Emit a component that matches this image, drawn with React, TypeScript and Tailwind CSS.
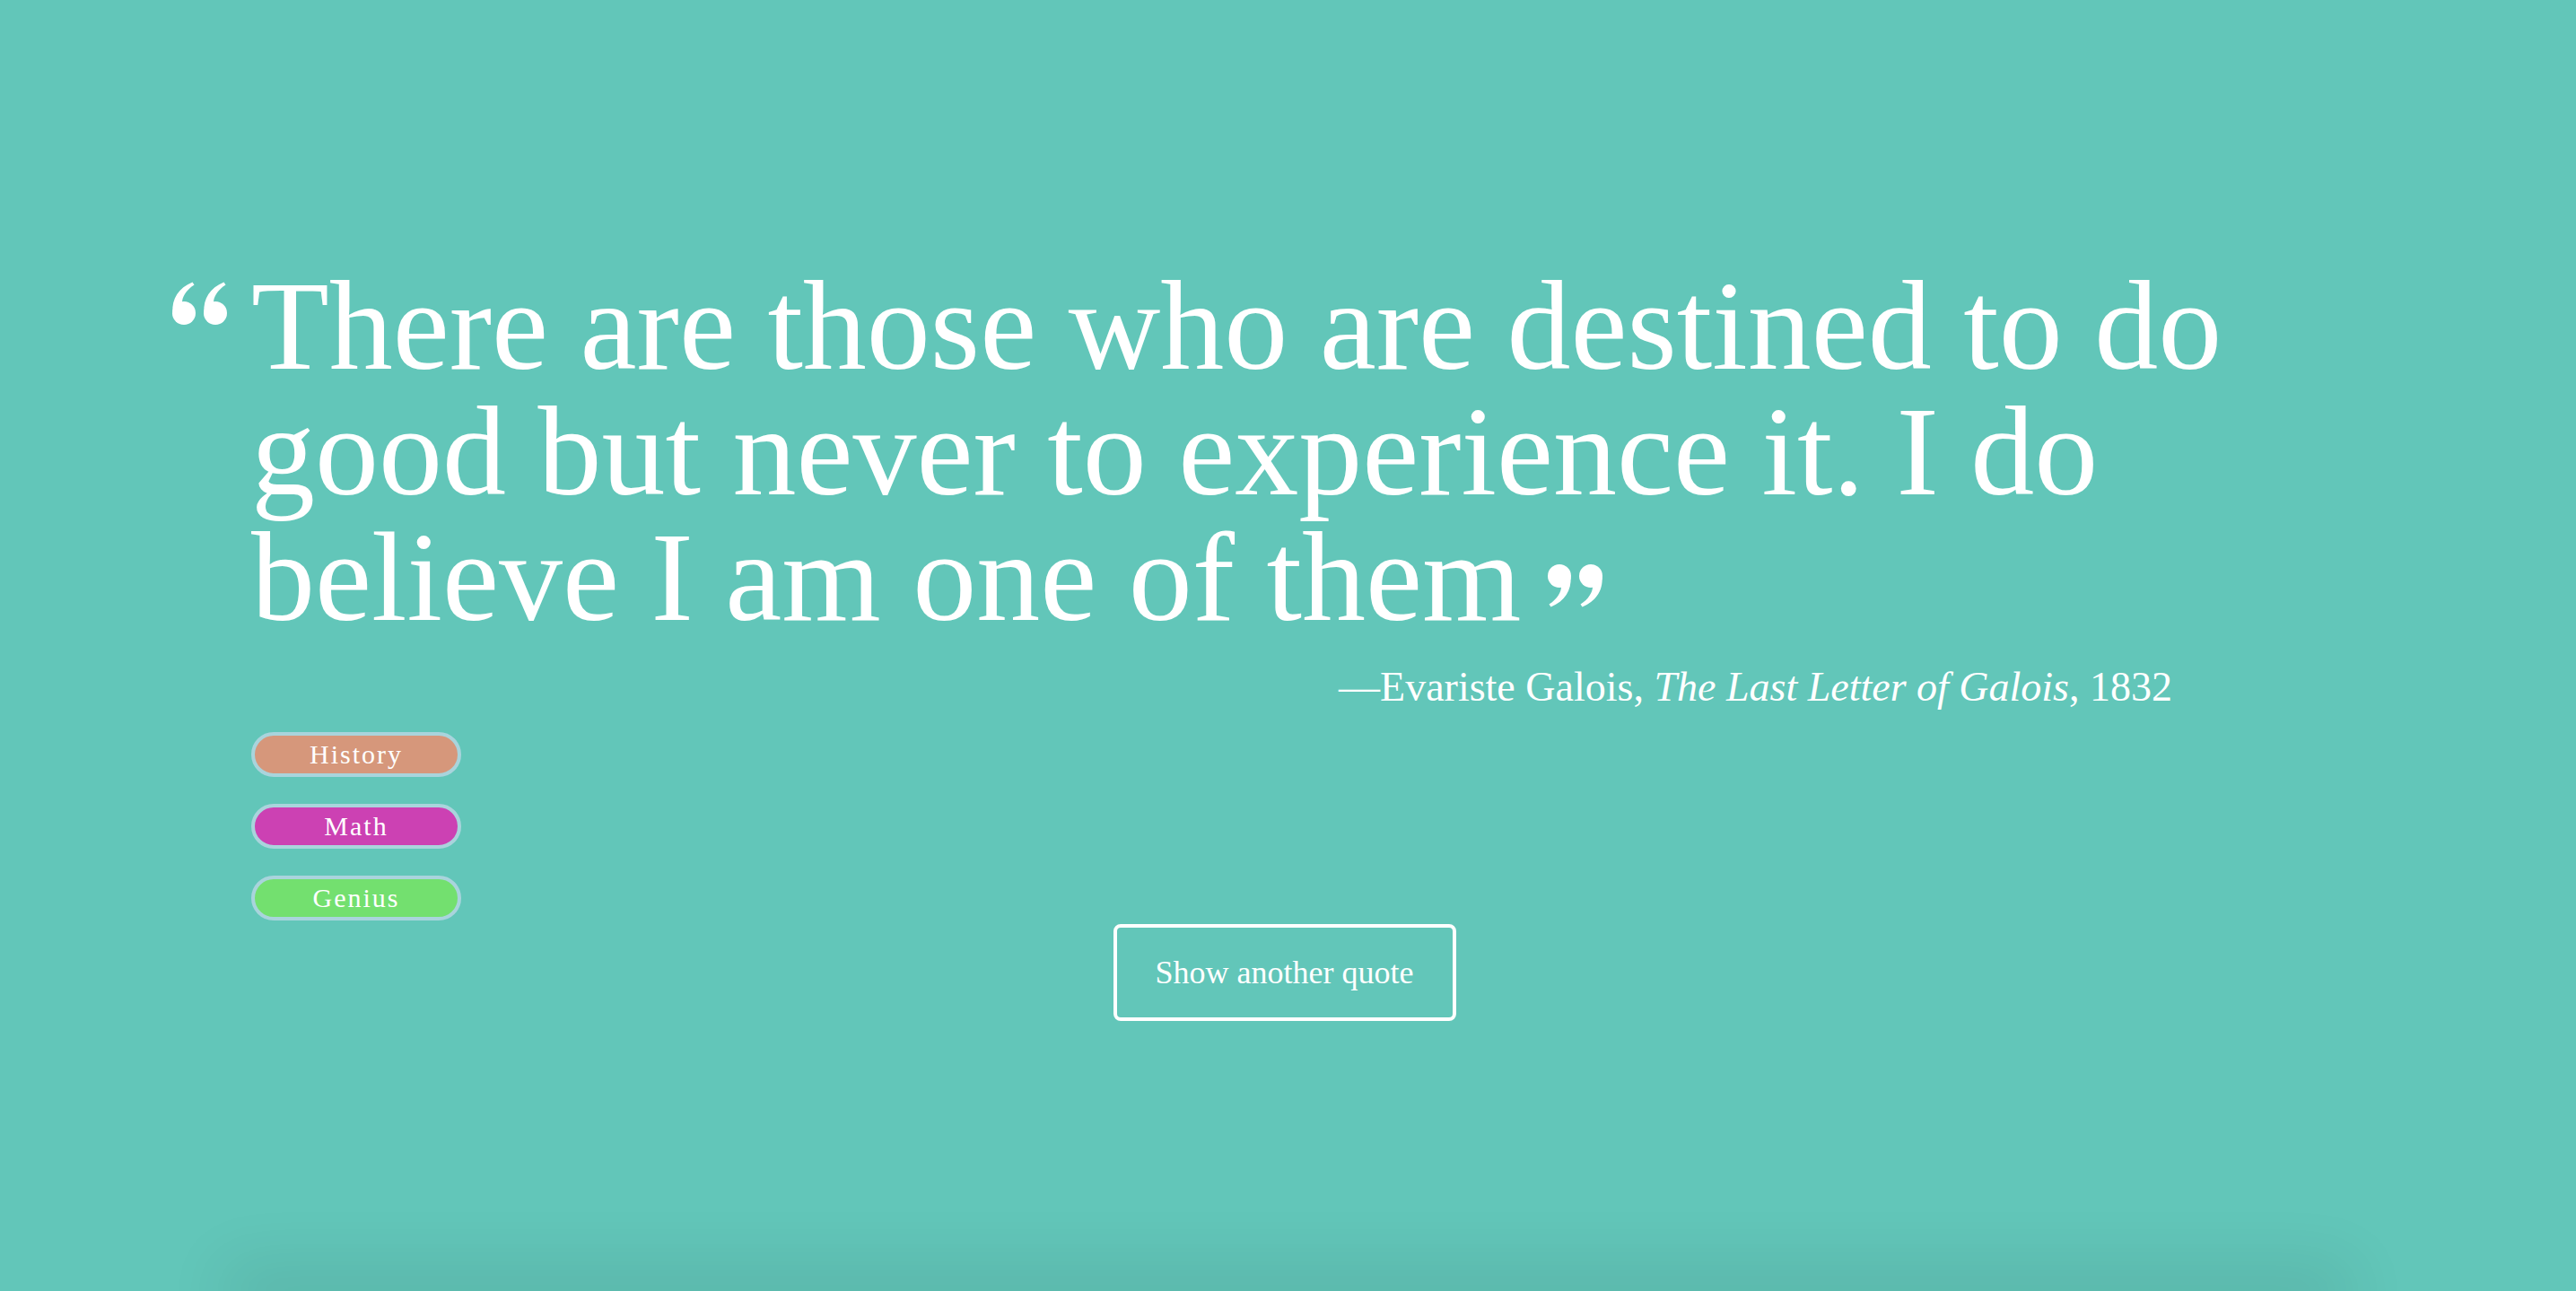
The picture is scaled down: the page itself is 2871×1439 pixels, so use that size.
import React from "react";

const Mark = () => (
  <>
    <circle cx="14" cy="14" r="13" />
    <path d="M26.6 15 C27.5 30 20 42 4.5 48.5 L2.5 45.5 C12 39.5 16.5 31 16 25 Z" />
  </>
);

const QuoteMark = ({ open }: { open?: boolean }) => (
  <svg
    width="64"
    height="49"
    viewBox="0 0 64 49"
    fill="white"
    className={open ? "rotate-180 block" : "block"}
  >
    <g>
      <Mark />
    </g>
    <g transform="translate(35 0)">
      <Mark />
    </g>
  </svg>
);

const tags = [
  { label: "History", cls: "bg-[#d6977b]" },
  { label: "Math", cls: "bg-[#cc41b3]" },
  { label: "Genius", cls: "bg-[#73e06f]" },
];

export default function App() {
  return (
    <div className="h-[1439px] overflow-hidden bg-[#62c6b9] font-['Liberation_Serif','Times_New_Roman',serif] text-white">
      <section className="h-[1439px] flex flex-col pt-[293px]">
        <div className="flex pl-[190px]">
          <div className="w-[90px] shrink-0 pt-[21px]">
            <QuoteMark open />
          </div>
          <p className="w-[2350px] text-[142px] leading-[140px]">
            There are those who are destined to do good but never to experience it. I do believe I am one of them
            <span className="inline-block ml-[28px] align-[14px]">
              <QuoteMark />
            </span>
          </p>
        </div>
        <p className="mt-[25px] pr-[450px] text-right text-[46px] leading-[55px]">
          —Evariste Galois, <i>The Last Letter of Galois</i>, 1832
        </p>
        <div className="mt-[23px] pl-[280px] flex flex-col gap-[30px]">
          {tags.map((t) => (
            <div
              key={t.label}
              className={`w-[234px] h-[50px] rounded-full border-4 border-[#a9d4dc] ${t.cls} flex items-center justify-center text-[30px] leading-none tracking-[2px]`}
            >
              {t.label}
            </div>
          ))}
        </div>
        <button className="self-center mt-[4px] mr-[8px] w-[382px] h-[108px] border-4 border-white rounded-[8px] text-[36px] text-white bg-transparent">
          Show another quote
        </button>
        <div className="mt-auto mx-[280px] h-0 shadow-[0_0_70px_30px_rgba(0,0,0,0.09)]" />
      </section>
    </div>
  );
}
